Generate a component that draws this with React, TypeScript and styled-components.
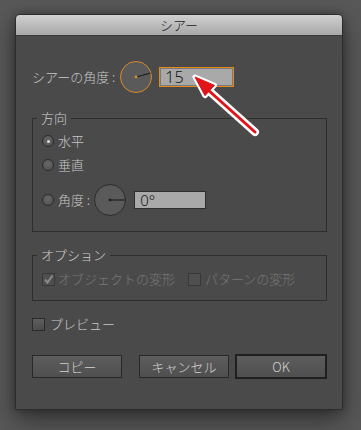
import React from "react";
import styled, { createGlobalStyle } from "styled-components";

const GlobalStyle = createGlobalStyle`
  html, body {
    margin: 0;
    padding: 0;
    background: #585858;
  }
  body {
    font-family: "Noto Sans CJK JP", "Noto Sans", sans-serif;
    font-weight: 300;
    -webkit-font-smoothing: antialiased;
  }
`;

const Stage = styled.div`
  position: relative;
  width: 361px;
  height: 430px;
  box-sizing: border-box;
  padding: 14px 0 0 15px;
  overflow: hidden;
`;

const Dialog = styled.div`
  width: 328px;
  height: 396px;
  box-sizing: border-box;
  display: flex;
  flex-direction: column;
  background: #4a4a4a;
  border: 1px solid #2c2c2c;
  border-radius: 5px 5px 0 0;
  box-shadow: 0 10px 26px rgba(0, 0, 0, 0.45), 0 0 8px rgba(0, 0, 0, 0.3);
`;

const TitleBar = styled.div`
  height: 20px;
  flex: none;
  display: flex;
  align-items: center;
  justify-content: center;
  border-radius: 4px 4px 0 0;
  background: linear-gradient(#d0d0d0, #a8a8a8);
  border-bottom: 1px solid #3a3a3a;
  color: #1c1c1c;
  font-size: 13px;
  line-height: 20px;
`;

const Body = styled.div`
  display: flex;
  flex-direction: column;
  padding: 0 15px 0 16px;
`;

const Row = styled.div<{ $top?: number }>`
  display: flex;
  align-items: center;
  margin-top: ${(p) => p.$top ?? 0}px;
`;

const Label = styled.span<{ $disabled?: boolean }>`
  font-size: 13px;
  line-height: 16px;
  color: ${(p) => (p.$disabled ? "#787878" : "#c8c8c8")};
  white-space: nowrap;
`;

const DialWrap = styled.div<{ $left: number; $right: number }>`
  width: 32px;
  height: 32px;
  flex: none;
  margin: 0 ${(p) => p.$right}px 0 ${(p) => p.$left}px;
`;

const NumberField = styled.div<{ $w: number; $h: number; $focus?: boolean }>`
  width: ${(p) => p.$w}px;
  height: ${(p) => p.$h}px;
  box-sizing: border-box;
  display: flex;
  align-items: center;
  padding-left: 5px;
  background: #a9a9a9;
  border: 1px solid ${(p) => (p.$focus ? "#e68a1e" : "#2e2e2e")};
  box-shadow: ${(p) => (p.$focus ? "inset 0 0 0 1px #7a7a7a" : "none")};
  font-family: "Noto Sans", "DejaVu Sans", sans-serif;
  font-weight: 300;
  font-size: ${(p) => (p.$focus ? 16 : 15)}px;
  color: #151515;
`;

const Group = styled.fieldset<{ $top: number; $pt: number; $pb: number }>`
  margin: ${(p) => p.$top}px 0 0 0;
  padding: ${(p) => p.$pt}px 9px ${(p) => p.$pb}px 9px;
  border: 1px solid #2e2e2e;
  display: flex;
  flex-direction: column;
  min-width: 0;
`;

const Legend = styled.legend`
  margin-left: -5px;
  padding: 0 4px;
  font-size: 13px;
  line-height: 16px;
  color: #cdcdcd;
`;

const Radio = styled.span<{ $on?: boolean }>`
  width: 12px;
  height: 12px;
  flex: none;
  box-sizing: border-box;
  border-radius: 50%;
  border: 1px solid #2a2a2a;
  background: radial-gradient(circle at 50% 35%, #666, #505050);
  margin-right: 4px;
  display: flex;
  align-items: center;
  justify-content: center;
  &::after {
    content: "";
    width: 3px;
    height: 3px;
    border-radius: 50%;
    background: #dcdcdc;
    display: ${(p) => (p.$on ? "block" : "none")};
  }
`;

const Check = styled.span<{ $disabled?: boolean; $left?: number; $right: number }>`
  width: 13px;
  height: 13px;
  flex: none;
  box-sizing: border-box;
  border: 1px solid ${(p) => (p.$disabled ? "#383838" : "#2a2a2a")};
  background: ${(p) => (p.$disabled ? "#4f4f4f" : "linear-gradient(#5e5e5e, #4c4c4c)")};
  margin: 0 ${(p) => p.$right}px 0 ${(p) => p.$left ?? 0}px;
  display: flex;
  align-items: center;
  justify-content: center;
`;

const Buttons = styled.div`
  display: flex;
  align-items: center;
  margin-top: 22px;
  gap: 6px;
`;

const Button = styled.div<{ $w: number; $primary?: boolean; $push?: number }>`
  width: ${(p) => p.$w}px;
  height: ${(p) => (p.$primary ? 25 : 23)}px;
  box-sizing: border-box;
  display: flex;
  align-items: center;
  justify-content: center;
  margin-left: ${(p) => p.$push ?? 0}px;
  border: ${(p) => (p.$primary ? 2 : 1)}px solid ${(p) => (p.$primary ? "#202020" : "#282828")};
  background: linear-gradient(#5d5d5d, #4f4f4f);
  color: #d2d2d2;
  font-size: 13px;
`;

const Arrow = styled.svg`
  position: absolute;
  left: 0;
  top: 0;
  pointer-events: none;
`;

function Dial({ angle, focus }: { angle: number; focus?: boolean }) {
  const r = 15;
  const rad = (angle * Math.PI) / 180;
  const x = 16 + r * Math.cos(rad);
  const y = 16 - r * Math.sin(rad);
  return (
    <svg width="32" height="32" viewBox="0 0 32 32">
      <circle cx="16" cy="16" r="15.5" fill="#5a5a5a" stroke={focus ? "#d98a2b" : "#2c2c2c"} strokeWidth="1" />
      <line x1="16" y1="16" x2={x} y2={y} stroke="#202020" strokeWidth="1.2" />
      <circle cx="16" cy="16" r="1.4" fill={focus ? "#e0902a" : "#222"} />
    </svg>
  );
}

function CheckMark() {
  return (
    <svg width="11" height="11" viewBox="0 0 11 11">
      <path d="M2 5.5 L4.5 8.5 L9.5 1.5" fill="none" stroke="#8a8a8a" strokeWidth="2" />
    </svg>
  );
}

export default function App() {
  return (
    <>
      <GlobalStyle />
      <Stage>
        <Dialog>
          <TitleBar>シアー</TitleBar>
          <Body>
            <Row $top={25}>
              <Label>シアーの角度 :</Label>
              <DialWrap $left={5} $right={7}>
                <Dial angle={15} focus />
              </DialWrap>
              <NumberField $w={75} $h={20} $focus>
                15
              </NumberField>
            </Row>

            <Group $top={17} $pt={7} $pb={15}>
              <Legend>方向</Legend>
              <Row>
                <Radio $on />
                <Label>水平</Label>
              </Row>
              <Row $top={8}>
                <Radio />
                <Label>垂直</Label>
              </Row>
              <Row $top={11}>
                <Radio />
                <Label>角度 :</Label>
                <DialWrap $left={4} $right={8}>
                  <Dial angle={0} />
                </DialWrap>
                <NumberField $w={72} $h={18}>
                  0°
                </NumberField>
              </Row>
            </Group>

            <Group $top={15} $pt={8} $pb={13}>
              <Legend>オプション</Legend>
              <Row>
                <Check $disabled $right={3}>
                  <CheckMark />
                </Check>
                <Label $disabled>オブジェクトの変形</Label>
                <Check $disabled $left={13} $right={4} />
                <Label $disabled>パターンの変形</Label>
              </Row>
            </Group>

            <Row $top={15}>
              <Check $right={5} />
              <Label>プレビュー</Label>
            </Row>

            <Buttons>
              <Button $w={90}>コピー</Button>
              <Button $w={90} $push={11}>
                キャンセル
              </Button>
              <Button $w={92} $primary>
                OK
              </Button>
            </Buttons>
          </Body>
        </Dialog>

        <Arrow width="361" height="430" viewBox="0 0 361 430">
          <line x1="255" y1="132" x2="207" y2="89" stroke="#fff" strokeWidth="8" strokeLinecap="round" />
          <polygon points="195,77 214.4,85.3 205,95.7" fill="#fff" stroke="#fff" strokeWidth="5" strokeLinejoin="round" />
          <line x1="255" y1="132" x2="207" y2="89" stroke="#e0141b" strokeWidth="3" strokeLinecap="round" />
          <polygon points="195,77 214.4,85.3 205,95.7" fill="#e0141b" stroke="#e0141b" strokeWidth="1" strokeLinejoin="round" />
        </Arrow>
      </Stage>
    </>
  );
}
